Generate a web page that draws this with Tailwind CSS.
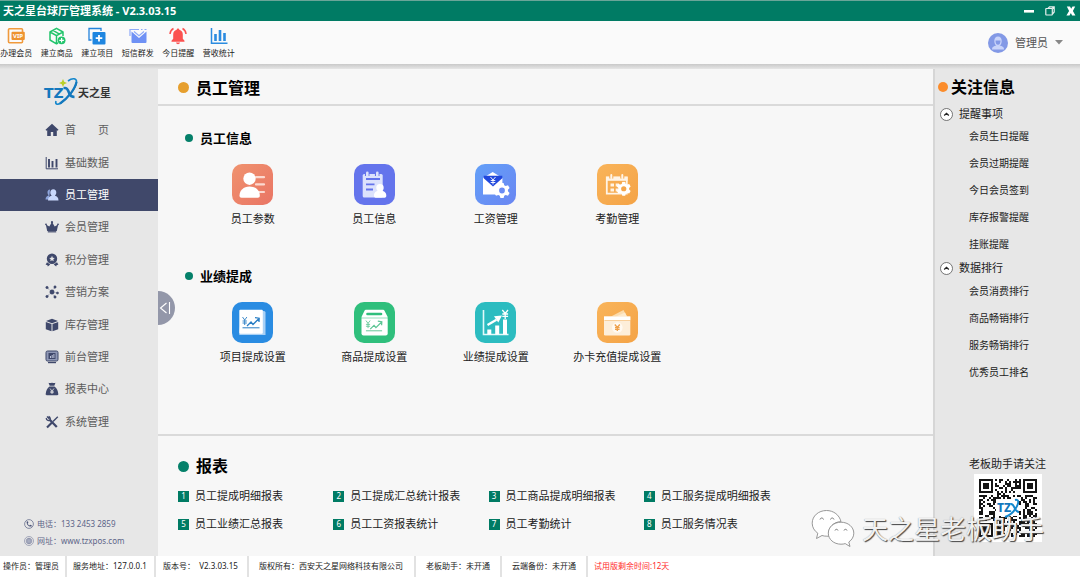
<!DOCTYPE html>
<html lang="zh-CN">
<head>
<meta charset="utf-8">
<meta name="viewport" content="width=device-width, initial-scale=1">
<title>天之星台球厅管理系统 - V2.3.03.15</title>
<script src="https://cdn.jsdelivr.net/npm/@tailwindcss/browser@4"></script>
</head>
<body class="flex min-h-screen flex-col overflow-x-hidden bg-white font-['Noto_Sans','Noto_Sans_CJK_SC',sans-serif] text-[11px] leading-4 text-[#222]">

<!-- Shared gear and trend shapes -->
<svg class="hidden" aria-hidden="true">
  <defs>
    <symbol id="gear" viewBox="-10 -10 20 20">
      <path fill-rule="evenodd" d="M-2-9.5h4l.8 2.8 1.8 1 2.9-.8 2 3.5L7.4-.9v1.8l2.1 2.1-2 3.5-2.9-.8-1.8 1L2 9.5h-4l-.8-2.8-1.8-1-2.9.8-2-3.5 2.1-2.1V-.9L-9.5-3l2-3.5 2.9.8 1.8-1zM0-3.6a3.6 3.6 0 1 0 0 7.2 3.6 3.6 0 0 0 0-7.2z"/>
    </symbol>
    <symbol id="trend" viewBox="0 0 20 14">
      <path d="M1 1l2.200 3L5.400 1M3.200 4v5M1 5h4.400M1 7h4.400" fill="none" stroke="currentColor" stroke-width=".9"/>
      <path d="M5.500 10l4-4 2 2.500 6-6M13.500 1.700l4.200.5-.2 3.800" fill="none" stroke="currentColor" stroke-width="1.300"/>
      <path d="M1 11.800h17" stroke="currentColor" stroke-width="1"/>
    </symbol>
  </defs>
</svg>

<!-- Title bar -->
<header class="flex h-[21px] items-center justify-between border-t border-[#6aa598] bg-[#007b64] pr-1 pl-[3px] text-white">
  <h1 class="text-[11px] font-bold">天之星台球厅管理系统 - V2.3.03.15</h1>
  <div class="flex items-center gap-[11px]">
    <button aria-label="最小化" class="flex h-4 w-[10px] items-center"><span class="h-[3px] w-full border-b border-[#9cb] bg-white"></span></button>
    <button aria-label="还原"><svg class="size-[10px]" viewBox="0 0 10 10" fill="none" stroke="#e6efed" stroke-width="1.200"><path d="M3 2.500L4.500.8H9.200V6L7.500 8M7.300 2.500L9 1"/><rect x=".8" y="2.500" width="6.500" height="6.500" rx=".5"/></svg></button>
    <button aria-label="关闭"><svg class="size-[10px]" viewBox="0 0 10 10"><path d="M.8.5h3.200l1.200 2.300L6.500.5h2.700L6.900 5l2.500 4.500H6.100L4.900 7 3.500 9.500H.4L3.100 5z" fill="#fff"/></svg></button>
  </div>
</header>

<!-- Toolbar -->
<div class="flex h-[43px] items-center justify-between bg-[#fafafa] pr-[17px]">
  <nav class="-ml-1 grid w-[243px] grid-cols-6 text-[8px] leading-[10px] whitespace-nowrap text-[#222]">
    <button class="flex flex-col items-center gap-[3px]">
      <svg class="size-[18px]" viewBox="0 0 18 18"><rect x="1.500" y="1.800" width="14" height="14" rx="1" fill="none" stroke="#f09a3c" stroke-width="1.600"/><rect x="4.500" y="4.800" width="13.300" height="8.200" rx="1" fill="#ee9330"/><text x="11.100" y="11.100" font-size="6" font-weight="700" text-anchor="middle" fill="#fff">VIP</text></svg>
      办理会员
    </button>
    <button class="flex flex-col items-center gap-[3px]">
      <svg class="size-[18px]" viewBox="0 0 18 18" fill="none" stroke="#22c46b" stroke-width="1.500" stroke-linejoin="round"><path d="M10 16l-1.500.8L2 13V5l6.500-3.700L15 5v4M2 5l6.500 3.700L15 5M8.500 8.700V16M5 3.400l6.500 3.700"/><circle cx="13.600" cy="13.300" r="3.900" fill="#22c46b" stroke="none"/><path d="M13.600 11v4.600M11.300 13.300h4.600" stroke="#fff" stroke-width="1.200"/></svg>
      建立商品
    </button>
    <button class="flex flex-col items-center gap-[3px]">
      <svg class="size-[18px]" viewBox="0 0 18 18"><path d="M3.500 13H1V1.500h12V4" fill="none" stroke="#2483dc" stroke-width="1.300"/><rect x="4.500" y="5" width="13" height="12.500" rx="1" fill="#1f86e0"/><path d="M11 8v6.500M7.700 11.200h6.600" stroke="#fff" stroke-width="1.800"/></svg>
      建立项目
    </button>
    <button class="flex flex-col items-center gap-[3px]">
      <svg class="size-[18px]" viewBox="0 0 18 18"><path d="M2.500 4.500L10 11l7.500-6.500V15a1 1 0 0 1-1 1h-13a1 1 0 0 1-1-1z" fill="#6f91f5"/><path d="M5 4.500l5 4.300 5-4.300" fill="none" stroke="#8eaaf8" stroke-width="1.200"/><path d="M1 9V2.500h9M12 2.500h1.500M15.500 2.500h2" fill="none" stroke="#8eaaf8" stroke-width="1.200"/></svg>
      短信群发
    </button>
    <button class="flex flex-col items-center gap-[3px]">
      <svg class="size-[18px]" viewBox="0 0 18 18" fill="#fb5250"><path d="M9 1.500c.9 0 1.300.6 1.300 1.300 2.300.6 3.500 2.300 3.500 4.700v4.200l1.700 2v1h-13v-1l1.700-2V7.500c0-2.400 1.200-4.100 3.500-4.700 0-.7.400-1.300 1.300-1.300zM7 15.500h4c-.3 1.200-1 1.700-2 1.700s-1.700-.5-2-1.700z"/><path d="M4.500 1.500C2.500 2.500 1.200 4.500 1 7M13.500 1.500c2 1 3.300 3 3.500 5.500" fill="none" stroke="#fb5250" stroke-width="1.500"/></svg>
      今日提醒
    </button>
    <button class="flex flex-col items-center gap-[3px]">
      <svg class="size-[18px]" viewBox="0 0 18 18" stroke="#2b8be0" fill="none"><path d="M1.500 1v15.200h16" stroke-width="1.500"/><path d="M5.500 7v7M10 3v11M14.500 6v8" stroke-width="2.600"/></svg>
      营收统计
    </button>
  </nav>
  <button class="flex items-center gap-[7px] text-[11px] text-[#555]" aria-haspopup="menu">
    <svg class="size-5" viewBox="0 0 20 20"><circle cx="10" cy="10" r="10" fill="#8399e6"/><path d="M4 16.500c0-3 2.500-4 6-4s6 1 6 4z" fill="#c9d4fa"/><path d="M6.300 8c0-3 1.400-4.600 3.700-4.600S13.700 5 13.700 8c0 3-1.600 5.300-3.700 5.300S6.300 11 6.300 8z" fill="#c9d4fa"/><path d="M7.500 7.500h5c0 2.800-.9 4.300-2.500 4.300s-2.500-1.500-2.500-4.300z" fill="#8399e6"/></svg>
    管理员
    <svg class="h-[5px] w-2" viewBox="0 0 8 5"><path d="M0 0h8L4 4.500z" fill="#888"/></svg>
  </button>
</div>
<div class="h-[5px] bg-linear-to-b from-[#c9c9c9] to-[#e6e6e6]"></div>

<div class="relative flex flex-1">
  <!-- Sidebar -->
  <aside class="flex w-[158px] shrink-0 flex-col bg-[#e7e7e7]">
    <div class="flex h-[45px] items-center pl-[43px]">
      <svg class="h-[30px] w-[70px]" viewBox="0 0 70 30" role="img" aria-label="TZX 天之星">
        <text x="1" y="20.500" font-size="14" font-weight="700" fill="#1478bd" font-family="DejaVu Sans">TZ</text>
        <path d="M20.500 11h1.500c2 0 2.500 1 3.300 3l1 2.500c.9 2.300 2 3.500 5.200 3.500" fill="none" stroke="#1478bd" stroke-width="2.600"/>
        <path d="M25 4C29.500.5 34 1 33.500 5.500 33 11 25 21 18 26c-4 2.500-6 1-5-2" fill="none" stroke="#1487cc" stroke-width="1.600"/>
        <path d="M33.500 5C32 12 25 21 17 26.500" fill="none" stroke="#1478bd" stroke-width="2.200"/>
        <path d="M20 2l1.200 2.800L24 6l-2.800 1.200L20 10l-1.200-2.800L16 6l2.800-1.200z" fill="#b9cf28"/>
        <text x="35" y="20" font-size="11" font-weight="700" fill="#333">天之星</text>
      </svg>
    </div>
    <nav class="grid h-[324px] grid-rows-10 text-[11px] text-[#5c5c5c]">
      <a href="#" class="flex items-center gap-[6px] pl-[45px]"><svg class="size-[14px] text-[#3f486b]" viewBox="0 0 14 14" fill="currentColor"><path d="M7 .8L.5 6.800l.8.9.9-.4V13h3.600V9h2.400v4h3.600V7.300l.9.400.8-.9z"/></svg><span class="flex w-11 justify-between"><span>首</span><span>页</span></span></a>
      <a href="#" class="flex items-center gap-[6px] pl-[45px]"><svg class="size-[14px] text-[#3f486b]" viewBox="0 0 14 14" fill="none" stroke="currentColor"><path d="M1.200 1v11.800H13"/><path d="M4 3v8.500M7.500 5v6.500M11.500 3v8.500" stroke-width="1.900"/></svg>基础数据</a>
      <a href="#" aria-current="page" class="flex items-center gap-[6px] bg-[#40486a] pl-[45px] text-white"><svg class="size-[14px]" viewBox="0 0 14 14"><path d="M5 1.500C3.300 1.500 2.300 3 2.500 5c.1 1 .6 1.800 1.200 2.400C2 8 .5 9 .5 11.500H4z" fill="#8fa6dd"/><path d="M8.300 1.200c2 0 3 1.500 3 3.300 0 1.300-.6 2.500-1.400 3.200 2.200.6 3.600 1.800 3.600 4.800H3c0-3 1.500-4.200 3.700-4.800C5.900 7 5.300 5.800 5.300 4.500c0-1.800 1-3.300 3-3.300z" fill="#c9d8fc"/></svg>员工管理</a>
      <a href="#" class="flex items-center gap-[6px] pl-[45px]"><svg class="size-[14px] text-[#3f486b]" viewBox="0 0 14 14" fill="currentColor"><path d="M.8 4.500l3.500 2L7 2l2.700 4.500 3.500-2L11.800 11H2.200z"/><path d="M2.800 11.200h8.400v1.200H2.800z"/><circle cx="1" cy="4.300" r=".9"/><circle cx="7" cy="2.200" r="1.100"/><circle cx="13" cy="4.300" r=".9"/></svg>会员管理</a>
      <a href="#" class="flex items-center gap-[6px] pl-[45px]"><svg class="size-[14px] text-[#3f486b]" viewBox="0 0 14 14" fill="currentColor"><path fill-rule="evenodd" d="M7 .6a5.200 5.200 0 1 1 0 10.400A5.200 5.200 0 0 1 7 .6zm0 2.200L6.200 4.800l-2 .2 1.500 1.300L5.300 8.300 7 7.300l1.700 1-.4-2L9.800 5l-2-.2z"/><path d="M2 9.200l3.300 2.200-2.500 2-.5-1.500-1.700-.2zM12 9.200l-3.300 2.200 2.500 2 .5-1.500 1.700-.2z"/></svg>积分管理</a>
      <a href="#" class="flex items-center gap-[6px] pl-[45px]"><svg class="size-[14px] text-[#3f486b]" viewBox="0 0 14 14" fill="currentColor" stroke="currentColor" stroke-width=".5"><path d="M7 7l-5-4.500M7 7l3-4.800M7 7l5.500 1M7 7l3 5M7 7l-5 4.500" stroke-dasharray="2.500 1"/><circle cx="7" cy="7" r="2.200"/><circle cx="2" cy="2.500" r="1.200"/><circle cx="10" cy="2" r="1.200"/><circle cx="12.500" cy="8" r="1.100"/><circle cx="10" cy="12" r="1.200"/><circle cx="2" cy="11.500" r="1.200"/></svg>营销方案</a>
      <a href="#" class="flex items-center gap-[6px] pl-[45px]"><svg class="size-[14px] text-[#3f486b]" viewBox="0 0 14 14" fill="currentColor"><path d="M7 .8l6 2.200-6 2.300L1 3zM.8 4l5.700 2.100v7.200L.8 11.200zM13.200 4L7.500 6.100v7.200l5.700-2.100z"/></svg>库存管理</a>
      <a href="#" class="flex items-center gap-[6px] pl-[45px]"><svg class="size-[14px] text-[#3f486b]" viewBox="0 0 14 14"><rect x="1" y="1" width="12" height="10" rx="1.500" fill="#8e97b5" stroke="currentColor"/><rect x="3.500" y="3" width="7" height="6" fill="currentColor"/><path d="M5.500 8V6M7.200 8V5M8.900 8V4" stroke="#cdd3e6" stroke-width=".9"/><path d="M3 12h8v1.200H3z" fill="currentColor"/></svg>前台管理</a>
      <a href="#" class="flex items-center gap-[6px] pl-[45px]"><svg class="size-[14px] text-[#3f486b]" viewBox="0 0 14 14" fill="currentColor"><path d="M3.500.8c1.200.7 2.200 0 3.500 0s2.300.7 3.500 0L9.300 3.700H4.700zM4.500 4.600h5C12 6.500 13 9 13.300 12c0 .8-.3 1.200-1 1.200H1.700c-.7 0-1-.4-1-1.200C1 9 2 6.500 4.500 4.600z"/><path d="M5 6.500L7 9l2-2.500M7 9v3M5.300 9.300h3.400M5.300 10.600h3.400" stroke="#e7e7e7" stroke-width=".8" fill="none"/></svg>报表中心</a>
      <a href="#" class="flex items-center gap-[6px] pl-[45px]"><svg class="size-[14px] text-[#3f486b]" viewBox="0 0 14 14" fill="none" stroke="currentColor"><path d="M4.500 4.500l7.300 7.500" stroke-width="2.300"/><path d="M2 1.500l2.300 2.200M1.200 3.200c.3 2 2 2.800 3.400 2.100 1.200-1 .8-3-1-3.900" stroke-width="1.400"/><path d="M2 12.500l5-5" stroke-width="2.200"/><path d="M8 6.500L12.800 1.800" stroke-width="1.400"/></svg>系统管理</a>
    </nav>
    <address class="mt-auto flex flex-col gap-[3px] pb-2 pl-6 text-[8px] leading-[14px] text-[#5d6587] not-italic">
      <p class="flex items-center gap-[3px]"><svg class="size-[10px]" viewBox="0 0 10 10"><circle cx="5" cy="5" r="4.400" fill="none" stroke="#69718f" stroke-width=".8"/><path d="M2.800 2.200l1.300.2.200 1.500-.7.700c.4.900 1 1.500 1.900 1.900l.7-.7 1.500.5v1.200c-2.800.8-5.800-2.500-4.900-5.300z" fill="#4c5579"/></svg>电话：133 2453 2859</p>
      <p class="flex items-center gap-[3px]"><svg class="size-[10px]" viewBox="0 0 10 10" fill="none" stroke="#868da6" stroke-width=".7"><circle cx="5" cy="5" r="4.500"/><circle cx="5" cy="5" r="2.800" fill="#b3b8c9"/><ellipse cx="5" cy="5" rx="1.200" ry="2.800"/></svg><span>网址：<a href="#">www.tzxpos.com</a></span></p>
    </address>
  </aside>

  <!-- Collapse handle over the sidebar edge -->
  <button aria-label="收起菜单" class="absolute top-[222px] left-[158px] flex h-[34px] w-[17px] items-center rounded-r-full bg-[#9397a9]">
    <svg class="h-3 w-[14px]" viewBox="0 0 14 12" fill="none" stroke="#fff" stroke-width="1.100"><path d="M8.500 1L2.500 6l6 5M11.500 0v12"/></svg>
  </button>

  <!-- Main -->
  <main class="flex min-w-0 flex-1 flex-col bg-[#f7f7f7]">
    <h2 class="flex h-[37px] items-center gap-[7px] border-b-2 border-[#dadada] pt-[2px] pl-5 text-[16px] font-bold text-black"><span class="size-[11px] rounded-full bg-[#e69f2e]"></span>员工管理</h2>

    <section class="pt-[24px]">
      <h3 class="flex h-4 items-center gap-[7px] pl-[27px] text-[13px] font-bold text-black"><span class="size-2 rounded-full bg-[#05806a]"></span>员工信息</h3>
      <div class="ml-[34px] grid w-[486px] grid-cols-4 pt-[18px] text-[11px] whitespace-nowrap">
        <button class="flex flex-col items-center gap-[6px]">
          <svg class="size-[41px]" viewBox="0 0 41 41"><defs><linearGradient id="g1" x2="1" y2="1"><stop stop-color="#f0936f"/><stop offset="1" stop-color="#e97464"/></linearGradient></defs><rect width="41" height="41" rx="10" fill="url(#g1)"/><path d="M24 13.200h8M24 20.400h8M27 28h5" stroke="#fbd9d0" stroke-width="2.200" stroke-linecap="round"/><circle cx="17.500" cy="14.700" r="6.200" fill="#fff"/><path d="M7.500 31.500c0-5 4-9 10-9s10.300 4 10.300 9c0 1.500-.7 2.200-2 2.200H9.500c-1.300 0-2-.7-2-2.200z" fill="#fff"/></svg>
          员工参数
        </button>
        <button class="flex flex-col items-center gap-[6px]">
          <svg class="size-[41px]" viewBox="0 0 41 41"><rect width="41" height="41" rx="10" fill="#6474ec"/><rect x="8.700" y="10" width="20" height="23.500" rx="1.500" fill="#dce2fc"/><path d="M13.200 8.500v3.500M23.200 8.500v3.500" stroke="#6474ec" stroke-width="4.500"/><rect x="12" y="7.500" width="2.600" height="5" rx="1.300" fill="#dce2fc"/><rect x="22" y="7.500" width="2.600" height="5" rx="1.300" fill="#dce2fc"/><path d="M12 15h14M12 20.300h8.500M12 25.500h7" stroke="#6474ec" stroke-width="1.800"/><circle cx="26" cy="23.700" r="3.700" fill="#fff"/><path d="M20 31.500c0-3.400 2.500-5 6-5s6.300 1.600 6.300 5c0 1.400-.5 2.200-1.600 2.200h-9c-1.200 0-1.700-.8-1.700-2.200z" fill="#fff"/></svg>
          员工信息
        </button>
        <button class="flex flex-col items-center gap-[6px]">
          <svg class="size-[41px]" viewBox="0 0 41 41"><defs><linearGradient id="g3" x2="1" y2="1"><stop stop-color="#63a0f8"/><stop offset="1" stop-color="#6a86f2"/></linearGradient></defs><rect width="41" height="41" rx="10" fill="url(#g3)"/><path d="M8 14l9.700-6L27.400 14v16.500H8z" fill="#fff"/><path d="M8.700 11.800h18.600v2.500l-9.300 8.200-9.300-8.200z" fill="#2148dc"/><path d="M15.500 13l2.500 3 2.500-3M18 16v4.500M15.700 16.500h4.600M15.700 18.500h4.600" stroke="#fff" stroke-width=".9" fill="none"/><circle cx="27" cy="26.500" r="5" fill="#6a8cf4"/><use href="#gear" x="19" y="18.500" width="16" height="16" fill="#fff"/></svg>
          工资管理
        </button>
        <button class="flex flex-col items-center gap-[6px]">
          <svg class="size-[41px]" viewBox="0 0 41 41"><defs><linearGradient id="g4" x2="1" y2="1"><stop stop-color="#f9b45a"/><stop offset="1" stop-color="#f4a346"/></linearGradient></defs><rect width="41" height="41" rx="10" fill="url(#g4)"/><path d="M9.800 13.500h20v16.200h-20z" fill="none" stroke="#fff4e6" stroke-width="1.800"/><path d="M9 12.800h21.500v4H9z" fill="#fff4e6"/><path d="M14.300 10.500v4M25.300 10.500v4" stroke="#f7ab50" stroke-width="4"/><path d="M14.300 11v3M25.300 11v3" stroke="#fff4e6" stroke-width="2" stroke-linecap="round"/><path d="M13.500 19.500H17v3h-3.500zM18.700 19.500H22v3h-3.300zM13.500 24.500H17v3h-3.500zM18.700 24.500H22v3h-3.300z" fill="#fff4e6"/><circle cx="26.700" cy="24.700" r="4.500" fill="#f5a64a"/><use href="#gear" x="19.500" y="17.500" width="14.500" height="14.500" fill="#fff"/></svg>
          考勤管理
        </button>
      </div>
    </section>

    <section class="pt-[41px]">
      <h3 class="flex h-4 items-center gap-[7px] pl-[27px] text-[13px] font-bold text-black"><span class="size-2 rounded-full bg-[#05806a]"></span>业绩提成</h3>
      <div class="ml-[34px] grid w-[486px] grid-cols-4 pt-[18px] text-[11px] whitespace-nowrap">
        <button class="flex flex-col items-center gap-[6px]">
          <svg class="size-[41px]" viewBox="0 0 41 41"><rect width="41" height="41" rx="10" fill="#2a8ce2"/><path d="M10 9h22a1.500 1.500 0 0 1 1.500 1.500V33H7.300v-4z" fill="#a9d1f6"/><rect x="7.300" y="7.700" width="23.500" height="24" rx="1" fill="#fff"/><use href="#trend" x="9.500" y="14" width="20" height="14" color="#2a7ec4"/></svg>
          项目提成设置
        </button>
        <button class="flex flex-col items-center gap-[6px]">
          <svg class="size-[41px]" viewBox="0 0 41 41"><rect width="41" height="41" rx="10" fill="#2fbf7c"/><path d="M12 7.700h17a1.500 1.500 0 0 1 1.500 1L33.700 15v.7H7.500V15l3-6.300a1.500 1.500 0 0 1 1.500-1z" fill="#fff"/><path d="M7.500 16.300h26.200v15.200a2 2 0 0 1-2 2H9.500a2 2 0 0 1-2-2z" fill="#fff"/><path d="M13.500 12H27" stroke="#2fbf7c" stroke-width="2.600" stroke-linecap="round"/><use href="#trend" x="11" y="17.500" width="19" height="13.500" color="#5cc594"/></svg>
          商品提成设置
        </button>
        <button class="flex flex-col items-center gap-[6px]">
          <svg class="size-[41px]" viewBox="0 0 41 41"><rect width="41" height="41" rx="10" fill="#2cbcc0"/><path d="M8.500 8v24.500h25" fill="none" stroke="#e2f9f9" stroke-width="1.600"/><path d="M12.300 27.500h4v5h-4zM20.200 23.500h4v9h-4zM28 17.500h4v15h-4z" fill="#fff"/><path d="M12.500 23l9-5.200" stroke="#fff" stroke-width="2.200"/><path d="M19 14.200l8-.7-3.700 7z" fill="#fff"/><path d="M27.300 8l2.900 3.500L33 8M30.200 11.500V17M27.300 12h5.800M27.300 14.300h5.800" fill="none" stroke="#fff" stroke-width="1.300"/></svg>
          业绩提成设置
        </button>
        <button class="flex flex-col items-center gap-[6px]">
          <svg class="size-[41px]" viewBox="0 0 41 41"><rect width="41" height="41" rx="10" fill="url(#g4)"/><path d="M14 14.500L26.500 8l3.300 6.500z" fill="#fbdcae"/><path d="M19 14.500l9-4 2 4z" fill="#fdeacd"/><path d="M7 14.500h26.300v17.700a1.300 1.300 0 0 1-1.300 1.300H8.300A1.300 1.300 0 0 1 7 32.200z" fill="#fdeed9"/><path d="M7 14.500h26.300V18H7z" fill="#fff"/><path d="M7.500 18.500h25.500" stroke="#f7c88b" stroke-width=".8"/><circle cx="20.300" cy="25.500" r="5.300" fill="#fffaf2"/><path d="M17.800 22.500l2.500 3 2.500-3M20.300 25.500V29M18 25.700h4.600M18 27.300h4.600" fill="none" stroke="#ee9f48" stroke-width="1.300"/></svg>
          办卡充值提成设置
        </button>
      </div>
    </section>

    <section class="mt-auto border-t-2 border-[#dadada] pt-5 pb-6">
      <h2 class="flex h-5 items-center gap-[7px] pl-5 text-[16px] font-bold text-black"><span class="size-[11px] rounded-full bg-[#05806a]"></span>报表</h2>
      <ul class="ml-5 grid w-[621px] grid-cols-4 gap-y-3 pt-3 text-[11px] whitespace-nowrap">
        <li><a href="#" class="flex items-center gap-[6px]"><span class="flex size-[11px] items-center justify-center bg-[#007b64] text-[8px] text-white">1</span>员工提成明细报表</a></li>
        <li><a href="#" class="flex items-center gap-[6px]"><span class="flex size-[11px] items-center justify-center bg-[#007b64] text-[8px] text-white">2</span>员工提成汇总统计报表</a></li>
        <li><a href="#" class="flex items-center gap-[6px]"><span class="flex size-[11px] items-center justify-center bg-[#007b64] text-[8px] text-white">3</span>员工商品提成明细报表</a></li>
        <li><a href="#" class="flex items-center gap-[6px]"><span class="flex size-[11px] items-center justify-center bg-[#007b64] text-[8px] text-white">4</span>员工服务提成明细报表</a></li>
        <li><a href="#" class="flex items-center gap-[6px]"><span class="flex size-[11px] items-center justify-center bg-[#007b64] text-[8px] text-white">5</span>员工业绩汇总报表</a></li>
        <li><a href="#" class="flex items-center gap-[6px]"><span class="flex size-[11px] items-center justify-center bg-[#007b64] text-[8px] text-white">6</span>员工工资报表统计</a></li>
        <li><a href="#" class="flex items-center gap-[6px]"><span class="flex size-[11px] items-center justify-center bg-[#007b64] text-[8px] text-white">7</span>员工考勤统计</a></li>
        <li><a href="#" class="flex items-center gap-[6px]"><span class="flex size-[11px] items-center justify-center bg-[#007b64] text-[8px] text-white">8</span>员工服务情况表</a></li>
      </ul>
    </section>
  </main>

  <!-- Right panel -->
  <aside class="flex w-[147px] shrink-0 flex-col border-l-2 border-[#d6d6d6] bg-[#e7e7e7] text-[#222]">
    <h2 class="flex h-9 items-center gap-[3px] pl-[3px] text-[16px] font-bold text-black"><span class="size-[10px] rounded-full bg-[#fb8c2b]"></span>关注信息</h2>
    <button class="flex h-[18px] items-center gap-[6px] pl-[5px] text-[11px]" aria-expanded="true"><svg class="size-[13px]" viewBox="0 0 13 13" fill="none"><circle cx="6.500" cy="6.500" r="6" fill="#fff" stroke="#555" stroke-width=".8"/><path d="M4.200 7.500l2.300-2.200 2.300 2.200" stroke="#222" stroke-width="1.300"/></svg>提醒事项</button>
    <ul class="text-[10px] leading-[27px]">
      <li class="pl-[34px]"><a href="#">会员生日提醒</a></li>
      <li class="pl-[34px]"><a href="#">会员过期提醒</a></li>
      <li class="pl-[34px]"><a href="#">今日会员签到</a></li>
      <li class="pl-[34px]"><a href="#">库存报警提醒</a></li>
      <li class="pl-[34px]"><a href="#">挂账提醒</a></li>
    </ul>
    <button class="flex h-5 items-center gap-[6px] pl-[5px] text-[11px]" aria-expanded="true"><svg class="size-[13px]" viewBox="0 0 13 13" fill="none"><circle cx="6.500" cy="6.500" r="6" fill="#fff" stroke="#555" stroke-width=".8"/><path d="M4.200 7.500l2.300-2.200 2.300 2.200" stroke="#222" stroke-width="1.300"/></svg>数据排行</button>
    <ul class="text-[10px] leading-[27px]">
      <li class="pl-[34px]"><a href="#">会员消费排行</a></li>
      <li class="pl-[34px]"><a href="#">商品畅销排行</a></li>
      <li class="pl-[34px]"><a href="#">服务畅销排行</a></li>
      <li class="pl-[34px]"><a href="#">优秀员工排名</a></li>
    </ul>
    <div class="mt-auto flex flex-col items-center pb-[14px] text-[11px]">
      <p>老板助手请关注</p>
      <svg id="qr" class="mt-[2px] size-[68px] bg-white" viewBox="-2.500 -2.500 34 34" role="img" aria-label="老板助手二维码" shape-rendering="crispEdges">
        <path id="qr-modules" fill="#151515"/>
        <rect x="8.500" y="10" width="11.500" height="8.500" fill="#fff"/>
        <text x="9" y="16.500" font-size="6" font-weight="800" fill="#1478bd">TZ</text>
        <path d="M16 12.500c2 0 1.500 4 4 4M18 10.500c4-1 0 7-5 8.500" fill="none" stroke="#1487cc" stroke-width="1" shape-rendering="auto"/>
      </svg>
    </div>
  </aside>

  <!-- Watermark over the lower right corner -->
  <div class="pointer-events-none absolute right-[36px] bottom-[7px] flex items-center gap-[7px]">
    <svg class="h-10 w-[44px]" viewBox="0 0 44 40"><g fill="#fff" stroke="#8c8c8c" stroke-width=".9"><path d="M15.500 1.500C7.500 1.500 1.200 7 1.200 14.200c0 4.200 2.200 7.700 5.600 10L5.500 29.500l5.500-3c1.500.5 3 .7 4.800.7h2C16 20 22 12.500 30 12.700 28.500 6 22.500 1.500 15.500 1.500z"/><path d="M30 13.200c-7.300 0-12.700 5-12.700 11s5.400 11 12.700 11c1.500 0 3-.2 4.200-.6l4.800 2.900-1.200-4.500c3-2 5-5.200 5-8.800 0-6-5.500-11-12.800-11z"/></g><g fill="none" stroke="#777"><path d="M9 10.500c.5-2 3-2 3.500 0M19.500 10.500c.5-2 3-2 3.500 0M24 21.500c.4-1.600 2.600-1.600 3 0M33 21.500c.4-1.600 2.600-1.600 3 0"/></g></svg>
    <span class="text-[26px] leading-10 text-[#f1f1f1] [text-shadow:1px_1px_1px_#444,0_0_1px_#999]">天之星老板助手</span>
  </div>
</div>

<!-- Status bar -->
<footer class="flex h-[21px] items-stretch bg-white text-[8px] leading-[20px] whitespace-nowrap text-[#222] *:border-[#e2e2e2]">
  <span class="w-[67px] border-r-2 pl-[3px]">操作员：管理员</span>
  <span class="w-[89px] border-r-2 pl-[6px]">服务地址：127.0.0.1</span>
  <span class="w-[93px] border-r-2 pl-[7px]">版本号：&nbsp; V2.3.03.15</span>
  <span class="w-[167px] border-r-2 pl-[10px]">版权所有：西安天之星网络科技有限公司</span>
  <span class="w-[86px] border-r-2 pl-[10px]">老板助手：未开通</span>
  <span class="w-[86px] border-r-2 pl-[10px]">云端备份：未开通</span>
  <span class="pl-[6px] text-[#ff2a2a]">试用版剩余时间:12天</span>
</footer>

<script>
  // Fill the QR symbol: three finder patterns plus seeded data modules.
  const N = 29;
  let seed = 20315, d = '';
  const finder = (x, y) => {
    for (const [ox, oy] of [[0, 0], [N - 7, 0], [0, N - 7]]) {
      const dx = x - ox, dy = y - oy;
      if (dx >= -1 && dx <= 7 && dy >= -1 && dy <= 7) {
        const r = Math.max(Math.abs(dx - 3), Math.abs(dy - 3));
        return r === 3 || r <= 1 ? 1 : 0;
      }
    }
    return -1;
  };
  for (let y = 0; y < N; y++) for (let x = 0; x < N; x++) {
    seed = (seed * 1103515245 + 12345) % 2147483648;
    const f = finder(x, y);
    if (f === 1 || (f < 0 && seed / 2147483648 > 0.47)) d += `M${x} ${y}h1v1h-1z`;
  }
  document.getElementById('qr-modules').setAttribute('d', d);
</script>
</body>
</html>
